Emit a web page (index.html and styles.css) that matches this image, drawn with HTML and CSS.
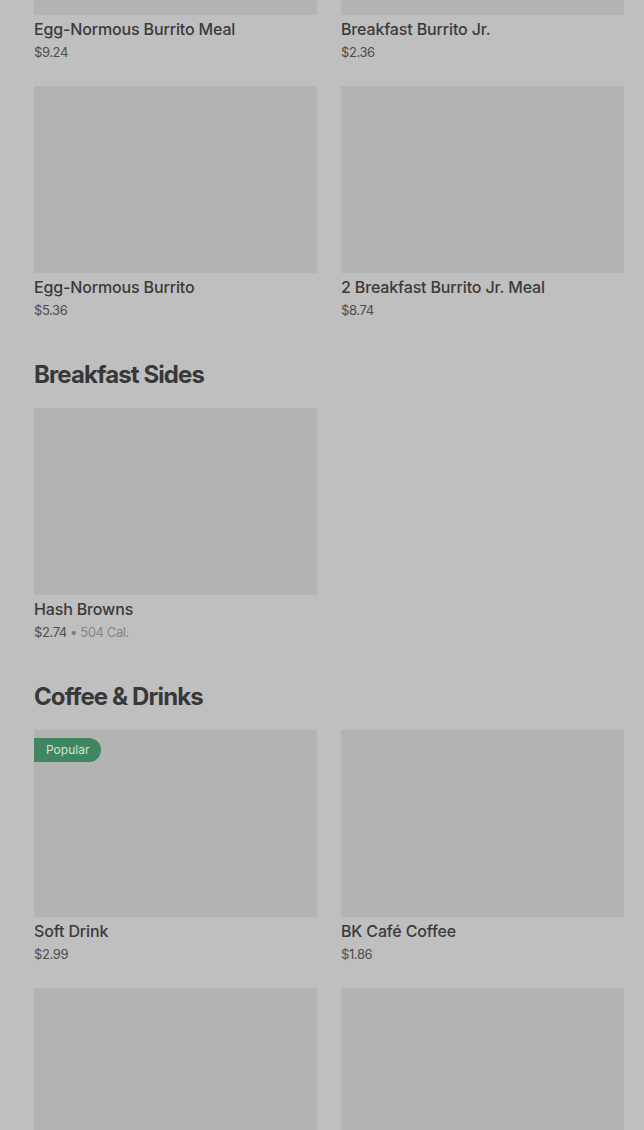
FILE: index.html
```html
<!DOCTYPE html>
<html>
<head>
<meta charset="utf-8">
<link rel="stylesheet" href="styles.css">
</head>
<body>
<div class="page">
  <section class="section first">
    <div class="grid">
      <div class="card">
        <div class="thumb"></div>
        <div class="name">Egg-Normous Burrito Meal</div>
        <div class="meta"><span class="price">$9.24</span></div>
      </div>
      <div class="card">
        <div class="thumb"></div>
        <div class="name">Breakfast Burrito Jr.</div>
        <div class="meta"><span class="price">$2.36</span></div>
      </div>
      <div class="card">
        <div class="thumb"></div>
        <div class="name">Egg-Normous Burrito</div>
        <div class="meta"><span class="price">$5.36</span></div>
      </div>
      <div class="card">
        <div class="thumb"></div>
        <div class="name">2 Breakfast Burrito Jr. Meal</div>
        <div class="meta"><span class="price">$8.74</span></div>
      </div>
    </div>
  </section>
  <section class="section">
    <h2 class="heading">Breakfast Sides</h2>
    <div class="grid">
      <div class="card">
        <div class="thumb"></div>
        <div class="name">Hash Browns</div>
        <div class="meta"><span class="price">$2.74</span><span class="dot"> • </span><span class="cal">504 Cal.</span></div>
      </div>
    </div>
  </section>
  <section class="section">
    <h2 class="heading">Coffee &amp; Drinks</h2>
    <div class="grid">
      <div class="card">
        <div class="thumb"><span class="badge">Popular</span></div>
        <div class="name">Soft Drink</div>
        <div class="meta"><span class="price">$2.99</span></div>
      </div>
      <div class="card">
        <div class="thumb"></div>
        <div class="name">BK Café Coffee</div>
        <div class="meta"><span class="price">$1.86</span></div>
      </div>
      <div class="card">
        <div class="thumb"></div>
      </div>
      <div class="card">
        <div class="thumb"></div>
      </div>
    </div>
  </section>
</div>
</body>
</html>
```
FILE: styles.css
```css
html, body {
  margin: 0;
  padding: 0;
  background: #bfbfbf;
  overflow: hidden;
}
body {
  font-family: Inter, "Liberation Sans", sans-serif;
  color: #393939;
}
.page {
  padding: 0 20px 0 34px;
  margin-top: -172px;
}
.section + .section {
  margin-top: 39px;
}
.heading {
  margin: 0 0 17px;
  font-size: 24px;
  line-height: 32px;
  font-weight: 700;
  letter-spacing: -0.9px;
  color: #383838;
}
.grid {
  display: grid;
  grid-template-columns: 283px 283px;
  column-gap: 24px;
  row-gap: 24px;
}
.card {
  display: flex;
  flex-direction: column;
}
.thumb {
  position: relative;
  height: 187px;
  background: #b3b3b3;
}
.name {
  margin-top: 4px;
  font-size: 16px;
  line-height: 20px;
  font-weight: 500;
  letter-spacing: -0.15px;
  color: #3a3a3a;
}
.meta {
  margin-top: 3px;
  font-size: 13px;
  line-height: 20px;
  color: #4d4d4d;
  letter-spacing: -0.4px;
}
.dot {
  color: #7a7a7a;
}
.cal {
  color: #878787;
}
.badge {
  position: absolute;
  left: 0;
  top: 8px;
  height: 24px;
  line-height: 24px;
  padding: 0 12px;
  font-size: 12px;
  color: #d3e3d8;
  background: #3f8760;
  border-radius: 0 12px 12px 0;
}
```
